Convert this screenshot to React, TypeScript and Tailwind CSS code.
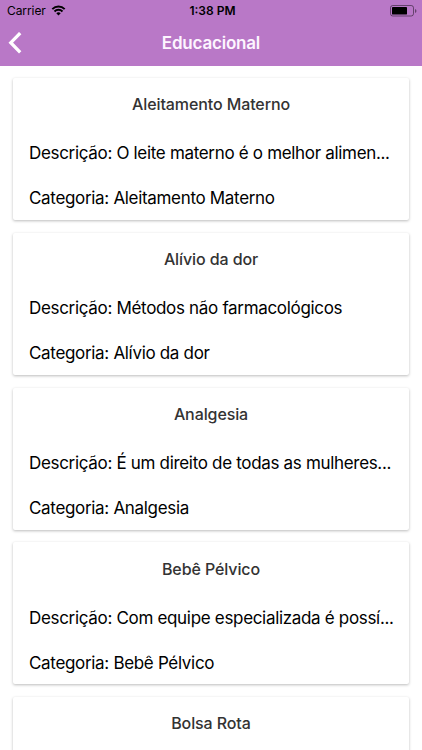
const items = [
  { title: 'Aleitamento Materno', description: 'O leite materno é o melhor alimen...' },
  { title: 'Alívio da dor', description: 'Métodos não farmacológicos' },
  { title: 'Analgesia', description: 'É um direito de todas as mulheres...' },
  { title: 'Bebê Pélvico', description: 'Com equipe especializada é possí...' },
  { title: 'Bolsa Rota' },
];

export default function App() {
  return (
    <div className="h-[750px] w-[422px] overflow-hidden bg-white font-['Inter',sans-serif]">
      <header className="h-[65.5px] bg-[#b978c7]">
        <div className="grid h-[22px] grid-cols-3 items-center pr-[5px] pl-[7px] text-[12px] text-black">
          <div className="flex items-center gap-[5px]">
            <span className="tracking-[-0.08px]">Carrier</span>
            <svg width="15" height="11" viewBox="0 0 14 11" fill="none" stroke="black" strokeWidth="2" className="-mt-px">
              <path d="M.8 4.1a8.9 8.9 0 0 1 12.4 0M3 6.5a5.7 5.7 0 0 1 8 0" />
              <path d="M4.8 8.3a3.1 3.1 0 0 1 4.4 0L7 10.6z" fill="black" stroke="none" />
            </svg>
          </div>
          <span className="pl-[1px] text-center font-semibold">1:38 PM</span>
          <div className="flex justify-end">
            <svg width="27" height="12" viewBox="0 0 27 12">
              <rect x=".5" y=".5" width="23" height="10.5" rx="2.3" fill="none" stroke="black" strokeOpacity=".45" />
              <rect x="2" y="2" width="15" height="7.5" rx=".4" />
              <path d="M25 4v4q1.5-.5 1.5-2T25 4" fillOpacity=".45" />
            </svg>
          </div>
        </div>
        <div className="grid h-[42px] grid-cols-3 items-center px-2">
          <svg width="14" height="22" viewBox="0 0 14 22" fill="none" stroke="white" strokeWidth="3.3" className="-mt-px">
            <path d="M12.2 1.1 2.8 10.7l9.4 9.6" />
          </svg>
          <h1 className="pt-px text-center text-[17px] font-semibold tracking-[-0.2px] text-[#fdf5ff]">Educacional</h1>
        </div>
      </header>
      <main className="flex flex-col gap-[12.75px] px-[13px] pt-[12.5px]">
        {items.map(({ title, description }) => (
          <article key={title} className="h-[142px] shrink-0 rounded-[2px] bg-white px-4 shadow-[0_1px_3px_rgba(0,0,0,0.27)]">
            <h2 className="pt-[14.4px] text-center text-[16px] leading-6 font-medium tracking-[-0.1px] text-[#333]">{title}</h2>
            {description && (
              <div className="text-[17px] leading-6 tracking-[-0.32px] whitespace-nowrap">
                <p className="mt-[25px]">Descrição: {description}</p>
                <p className="mt-[21px]">Categoria: {title}</p>
              </div>
            )}
          </article>
        ))}
      </main>
    </div>
  );
}
